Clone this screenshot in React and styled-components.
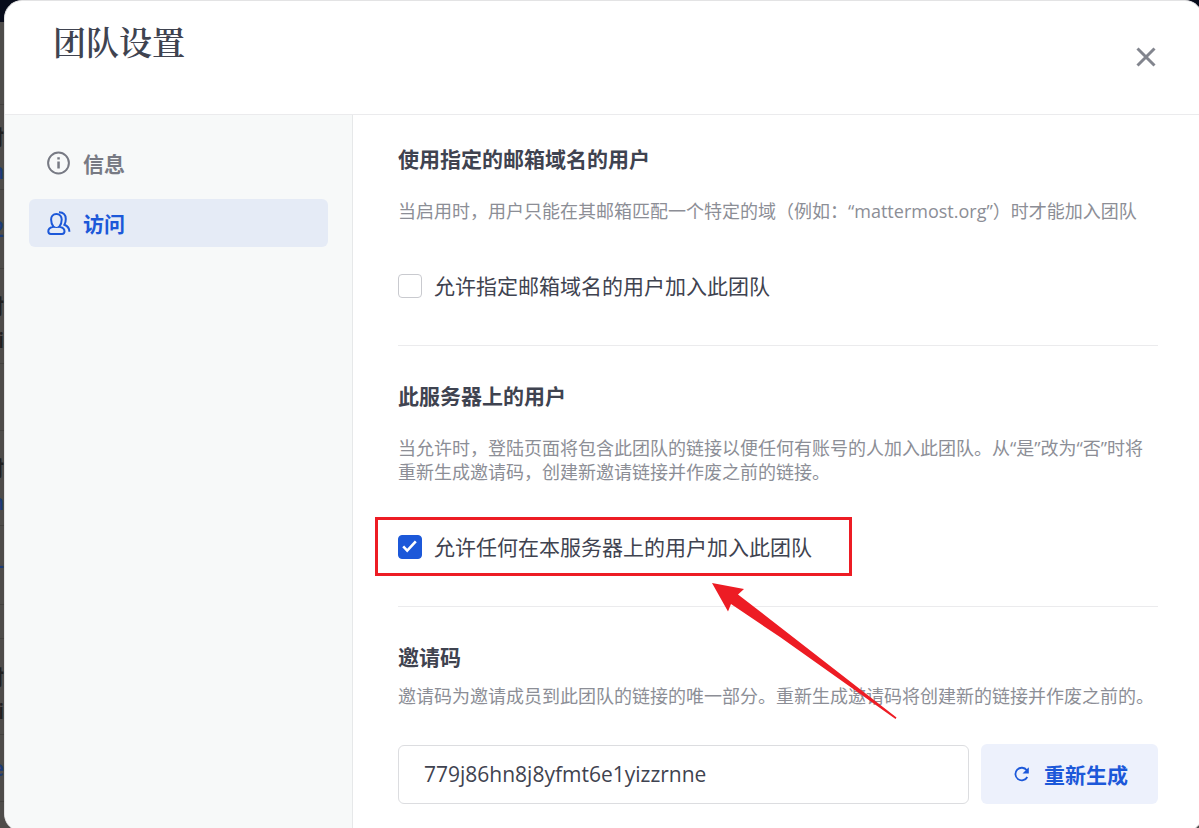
import React, { useState } from "react";
import styled, { createGlobalStyle } from "styled-components";

const GlobalStyle = createGlobalStyle`
  * {
    box-sizing: border-box;
  }
  body {
    margin: 0;
    color: #3f4350;
    font-family: "Open Sans", "Noto Sans CJK SC", sans-serif;
    font-size: 21px;
    line-height: 28px;
  }
  h1, h2, p {
    margin: 0;
  }
  button, input {
    font-family: inherit;
    font-size: inherit;
  }
`;

const Backdrop = styled.div`
  display: flex;
  height: 100vh;
  overflow: hidden;
  background: linear-gradient(#080c1b 22px, #4e4c4a 22px);
`;

const Channels = styled.div`
  flex: 0 0 4px;
  width: 4px;
  padding-top: 22px;
  overflow: hidden;
`;

const ChannelRow = styled.div`
  display: flex;
  flex-direction: column;
  align-items: flex-end;
  justify-content: center;
  height: ${({ $height }) => $height}px;
  padding-top: ${({ $single }) => ($single ? 0 : 14)}px;
  border-bottom: 1px solid #43413f;
`;

const ChannelText = styled.span`
  color: ${({ $link }) => ($link ? "#1b3a78" : "#201f1f")};
  font-weight: 600;
  line-height: 34px;
`;

const Dialog = styled.div`
  display: flex;
  flex: 1 0 100%;
  flex-direction: column;
  min-height: calc(100vh + 4px);
  border: 1px solid #e3e3e4;
  border-radius: 18px;
  background: #fff;
  overflow: hidden;
`;

const Header = styled.header`
  display: flex;
  flex-shrink: 0;
  justify-content: space-between;
  height: 114px;
  padding: 16px 46px 0 48px;
  border-bottom: 1px solid #ebebed;
`;

const Title = styled.h1`
  font-family: "Noto Serif CJK SC", "Noto Serif SC", "Liberation Serif", serif;
  font-size: 33px;
  font-weight: 600;
  line-height: 48px;
`;

const CloseButton = styled.button`
  display: flex;
  align-self: flex-start;
  margin-top: 30px;
  padding: 0;
  border: 0;
  background: none;
  color: #82858e;
  cursor: pointer;
`;

const Body = styled.div`
  display: flex;
  flex: 1;
`;

const Sidebar = styled.nav`
  display: flex;
  flex: 0 0 348px;
  flex-direction: column;
  gap: 12px;
  padding: 24px;
  border-right: 1px solid #e6e8e9;
  background: #f7f9f9;
`;

const Tab = styled.button`
  display: flex;
  align-items: center;
  gap: 12px;
  height: 48px;
  padding: 0 18px;
  border: 0;
  border-radius: 6px;
  background: ${({ $active }) => ($active ? "#e5ebf6" : "transparent")};
  color: ${({ $active }) => ($active ? "#1c58d9" : "#777a84")};
  font-weight: 600;
  cursor: pointer;
`;

const Content = styled.main`
  flex: 1;
  min-width: 0;
  padding: 31px 44px 31px 45px;
`;

const Section = styled.section`
  & + & {
    margin-top: 47px;
    padding-top: 37px;
    border-top: 1px solid #ebebed;
  }
`;

const Heading = styled.h2`
  font-size: 21px;
  font-weight: 700;
  line-height: 26px;
`;

const Description = styled.p`
  margin-top: ${({ $tight }) => ($tight ? 14 : 27)}px;
  color: #8c8e96;
  font-size: 18px;
  line-height: 24px;
`;

const CheckRow = styled.div`
  display: flex;
  position: relative;
  width: fit-content;
  margin-top: 51px;
`;

const CheckLabel = styled.label`
  display: flex;
  align-items: center;
  gap: 12px;
  height: 24px;
  cursor: pointer;
`;

const Checkbox = styled.input`
  appearance: none;
  width: 24px;
  height: 24px;
  margin: 0;
  border: 1px solid #c9cacf;
  border-radius: 4px;
  background: #fff;
  cursor: pointer;

  &:checked {
    border-color: #1c58d9;
    background: #1c58d9
      url("data:image/svg+xml,%3Csvg xmlns='http://www.w3.org/2000/svg' viewBox='0 0 22 22'%3E%3Cpath d='M4.2 10.400l4 4.200L16.800 5.400' fill='none' stroke='white' stroke-width='2.6'/%3E%3C/svg%3E")
      center / 22px no-repeat;
  }
`;

const Highlight = styled.div`
  position: absolute;
  inset: -18px -40px -17px -23px;
  border: 3px solid #ed1c24;
  pointer-events: none;
`;

const Arrow = styled.svg`
  position: absolute;
  top: 48px;
  left: 314px;
  pointer-events: none;
`;

const CodeRow = styled.div`
  display: flex;
  align-items: center;
  gap: 12px;
  margin-top: 36px;
`;

const CodeInput = styled.input`
  flex: 1;
  min-width: 0;
  height: 59px;
  padding: 0 25px;
  border: 1px solid #dcdde0;
  border-radius: 6px;
  background: #fff;
  color: #3f4350;
  outline: none;
`;

const RegenerateButton = styled.button`
  display: flex;
  align-items: center;
  gap: 12px;
  height: 60px;
  padding: 0 30px;
  border: 0;
  border-radius: 6px;
  background: #edf1fc;
  color: #1c58d9;
  font-weight: 700;
  cursor: pointer;
`;

const CloseIcon = () => (
  <svg width="20" height="20" viewBox="0 0 20 20" aria-hidden="true">
    <path d="M1.500 1.500l17 17M18.500 1.500l-17 17" stroke="currentColor" strokeWidth="3" />
  </svg>
);

const InfoIcon = () => (
  <svg width="24" height="24" viewBox="0 0 24 24" aria-hidden="true">
    <circle cx="11.500" cy="12" r="10.400" fill="none" stroke="currentColor" strokeWidth="2" />
    <path d="M10.300 6.200h2.500v2.200h-2.500zM10.300 10.400h2.500v7.200h-2.500z" fill="currentColor" />
  </svg>
);

const UsersIcon = () => (
  <svg width="24" height="24" viewBox="0 0 24 24" fill="none" stroke="currentColor" strokeWidth="2" aria-hidden="true">
    <path d="M9.400 3c-3.400 0-5.300 2.400-5.300 5.500 0 2.900.9 5.400 2.300 7.200-2.800.5-5.100 1.600-5.100 4.600 0 1.800.9 2.700 2.500 2.700h11.200c1.600 0 2.500-.9 2.500-2.700 0-3-2.300-4.100-5.100-4.600 1.400-1.800 2.300-4.300 2.300-7.200C14.700 5.400 12.800 3 9.400 3z" />
    <path d="M6 15.300c1.800 1.600 5 1.600 6.800 0" strokeWidth="1.200" />
    <path d="M12 1.200c4.300.2 6.800 2.900 6.800 6.800 0 2.400-.5 4.300-1.400 5.800 3 1.200 5 3 5 7" />
  </svg>
);

const RefreshIcon = () => (
  <svg width="21" height="21" viewBox="0 0 21 21" aria-hidden="true">
    <path d="M15.800 6.300A6.300 6.300 0 1 0 16.300 13" fill="none" stroke="currentColor" strokeWidth="1.800" />
    <path d="M17.800 3.200v6.300h-6.300z" fill="currentColor" />
  </svg>
);

const channels = [
  { height: 83, lines: [] },
  { height: 85, lines: [{ text: "材" }, { text: "n", link: true }] },
  { height: 79, lines: [{ text: "2", link: true }] },
  { height: 95, lines: [{ text: "材" }, { text: "i" }] },
  { height: 67, lines: [] },
  { height: 95, lines: [{ text: "材" }, { text: "n", link: true }] },
  { height: 79, lines: [{ text: "-", link: true }] },
  { height: 34, lines: [] },
  { height: 96, lines: [{ text: "材" }, { text: "i" }] },
  { height: 67, lines: [{ text: "e", link: true }] },
];

const tabs = [
  { id: "info", label: "信息", icon: <InfoIcon /> },
  { id: "access", label: "访问", icon: <UsersIcon /> },
];

const App = () => {
  const [activeTab, setActiveTab] = useState("access");
  const [allowDomain, setAllowDomain] = useState(false);
  const [allowAnyone, setAllowAnyone] = useState(true);

  return (
    <>
      <GlobalStyle />
      <Backdrop>
        <Channels aria-hidden="true">
          {channels.map(({ height, lines }, idx) => (
            <ChannelRow key={idx} $height={height} $single={lines.length === 1}>
              {lines.map(({ text, link }) => (
                <ChannelText key={text} $link={link}>
                  {text}
                </ChannelText>
              ))}
            </ChannelRow>
          ))}
        </Channels>
        <Dialog role="dialog" aria-labelledby="dialog-title">
          <Header>
            <Title id="dialog-title">团队设置</Title>
            <CloseButton type="button" aria-label="关闭">
              <CloseIcon />
            </CloseButton>
          </Header>
          <Body>
            <Sidebar>
              {tabs.map(({ id, label, icon }) => (
                <Tab
                  key={id}
                  type="button"
                  $active={activeTab === id}
                  onClick={() => setActiveTab(id)}
                >
                  {icon}
                  {label}
                </Tab>
              ))}
            </Sidebar>
            <Content>
              <Section>
                <Heading>使用指定的邮箱域名的用户</Heading>
                <Description>
                  当启用时，用户只能在其邮箱匹配一个特定的域（例如：“mattermost.org”）时才能加入团队
                </Description>
                <CheckRow>
                  <CheckLabel htmlFor="allow-domain">
                    <Checkbox
                      id="allow-domain"
                      type="checkbox"
                      checked={allowDomain}
                      onChange={(e) => setAllowDomain(e.target.checked)}
                    />
                    允许指定邮箱域名的用户加入此团队
                  </CheckLabel>
                </CheckRow>
              </Section>
              <Section>
                <Heading>此服务器上的用户</Heading>
                <Description>
                  当允许时，登陆页面将包含此团队的链接以便任何有账号的人加入此团队。从“是”改为“否”时将重新生成邀请码，创建新邀请链接并作废之前的链接。
                </Description>
                <CheckRow>
                  <CheckLabel htmlFor="allow-anyone">
                    <Checkbox
                      id="allow-anyone"
                      type="checkbox"
                      checked={allowAnyone}
                      onChange={(e) => setAllowAnyone(e.target.checked)}
                    />
                    允许任何在本服务器上的用户加入此团队
                  </CheckLabel>
                  <Highlight />
                  <Arrow width="186" height="138" viewBox="0 0 186 138" aria-hidden="true">
                    <path
                      d="M0 0L32 6L26 11.500L68 44L184.500 134.500L183.500 136L68 54L19 21L16 28.500Z"
                      fill="#ed1c24"
                    />
                  </Arrow>
                </CheckRow>
              </Section>
              <Section>
                <Heading id="code-title">邀请码</Heading>
                <Description $tight>
                  邀请码为邀请成员到此团队的链接的唯一部分。重新生成邀请码将创建新的链接并作废之前的。
                </Description>
                <CodeRow>
                  <CodeInput aria-labelledby="code-title" readOnly value="779j86hn8j8yfmt6e1yizzrnne" />
                  <RegenerateButton type="button">
                    <RefreshIcon />
                    重新生成
                  </RegenerateButton>
                </CodeRow>
              </Section>
            </Content>
          </Body>
        </Dialog>
      </Backdrop>
    </>
  );
};

export default App;
